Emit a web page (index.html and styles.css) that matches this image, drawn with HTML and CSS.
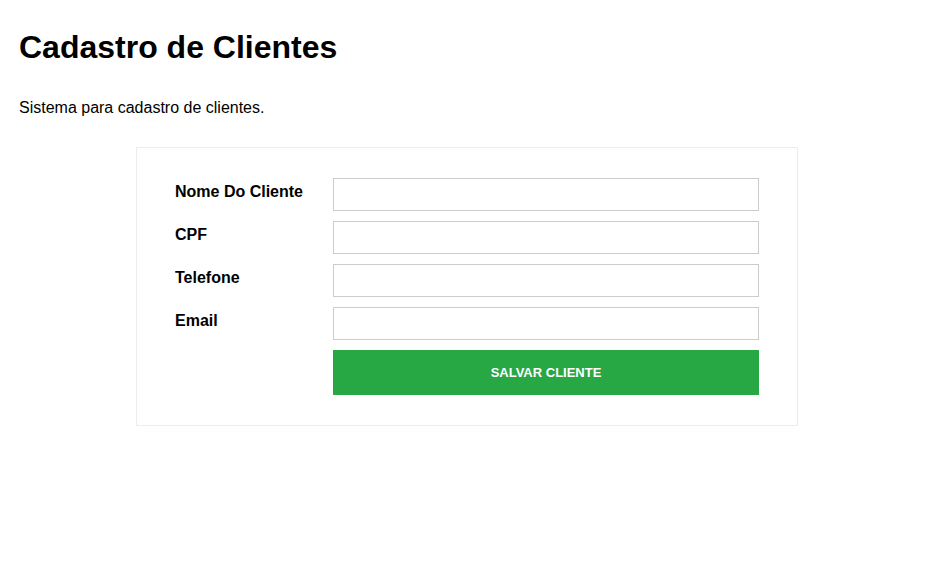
FILE: index.html
```html
<!DOCTYPE html>
<html lang="pt-BR">
<head>
<meta charset="utf-8">
<title>Cadastro de Clientes</title>
<link rel="stylesheet" href="styles.css">
</head>
<body>
<div class="page">
  <h1 class="title">Cadastro de Clientes</h1>
  <p class="subtitle">Sistema para cadastro de clientes.</p>
  <form class="card">
    <div class="row">
      <label class="label" for="nome">Nome Do Cliente</label>
      <input class="input" id="nome" type="text">
    </div>
    <div class="row">
      <label class="label" for="cpf">CPF</label>
      <input class="input" id="cpf" type="text">
    </div>
    <div class="row">
      <label class="label" for="tel">Telefone</label>
      <input class="input" id="tel" type="text">
    </div>
    <div class="row">
      <label class="label" for="email">Email</label>
      <input class="input" id="email" type="text">
    </div>
    <div class="row">
      <span class="label"></span>
      <button class="button" type="button">SALVAR CLIENTE</button>
    </div>
  </form>
</div>
</body>
</html>
```

FILE: styles.css
```css
* { box-sizing: border-box; }
html, body { margin: 0; padding: 0; background: #fff; }
body {
  font-family: "Liberation Sans", Arial, sans-serif;
  color: #000;
}
.page {
  padding: 29px 18px 0 18px;
}
.title {
  font-size: 32px;
  line-height: 37px;
  font-weight: bold;
  margin: 0 0 33px 1px;
}
.subtitle {
  font-size: 16px;
  line-height: 18px;
  margin: 0 0 30px 1px;
}
.card {
  width: 662px;
  margin-left: 118px;
  border: 1px solid #ececec;
  padding: 30px 38px 30px 38px;
  display: flex;
  flex-direction: column;
  gap: 10px;
}
.row {
  display: flex;
  align-items: flex-start;
}
.label {
  width: 158px;
  flex: none;
  font-weight: bold;
  font-size: 16px;
  line-height: 18px;
  padding-top: 5px;
}
.input {
  width: 426px;
  height: 33px;
  border: 1px solid #ccc;
  border-radius: 0;
  padding: 0 8px;
  margin: 0;
  font-family: inherit;
  font-size: 14px;
  background: #fff;
}
.button {
  width: 426px;
  height: 45px;
  border: none;
  border-radius: 0;
  background: #28a745;
  color: #fff;
  font-family: "Liberation Sans", Arial, sans-serif;
  font-weight: bold;
  font-size: 13px;
  margin: 0;
  padding: 0;
}
```
